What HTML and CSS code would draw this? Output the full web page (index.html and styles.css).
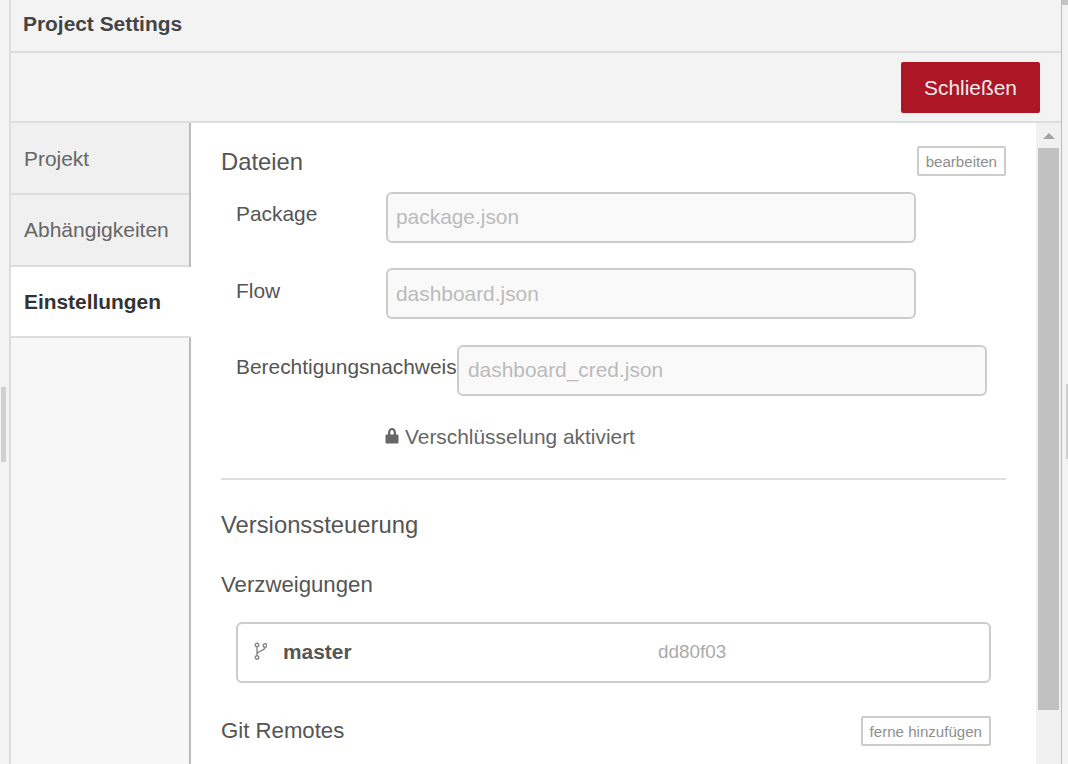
FILE: index.html
```html
<!DOCTYPE html>
<html lang="de">
<head>
<meta charset="utf-8">
<title>Project Settings</title>
<link rel="stylesheet" href="styles.css">
</head>
<body>
<div class="page">
  <div class="handle handle-left"></div>
  <div class="handle handle-right"></div>
  <div class="handle-top"></div>
  <main class="dialog">
    <header class="title-bar">Project Settings</header>
    <div class="toolbar"><button class="close-btn">Schließen</button></div>
    <div class="body">
      <nav class="tabs">
        <div class="tab">Projekt</div>
        <div class="tab tab-deps">Abhängigkeiten</div>
        <div class="tab tab-active">Einstellungen</div>
      </nav>
      <section class="content">
        <div class="pane">
          <div class="heading-row heading-files">
            <h2 class="heading">Dateien</h2>
            <button class="small-btn">bearbeiten</button>
          </div>
          <div class="file-row row-package">
            <label class="file-label">Package</label>
            <div class="file-input">package.json</div>
          </div>
          <div class="file-row row-flow">
            <label class="file-label">Flow</label>
            <div class="file-input">dashboard.json</div>
          </div>
          <div class="file-row row-cred">
            <label class="file-label file-label-auto">Berechtigungsnachweis</label>
            <div class="file-input">dashboard_cred.json</div>
          </div>
          <div class="encrypt">
            <svg class="lock" viewBox="0 0 14 16" width="14" height="16" aria-hidden="true"><path fill="#666" fill-rule="evenodd" d="M3 6.500V4.600C3 2 4.800 0 7 0s4 2 4 4.600v1.900h1.200c.7 0 1.300.6 1.300 1.300v6.400c0 .7-.6 1.300-1.300 1.300H1.800c-.7 0-1.300-.6-1.300-1.300V7.800c0-.7.6-1.300 1.300-1.300zm2.300 0h3.400V4.600C8.700 3 8 2.100 7 2.100s-1.700.9-1.700 2.500z"/></svg>
            <span>Verschlüsselung aktiviert</span>
          </div>
          <hr class="rule">
          <h2 class="heading heading-vc">Versionssteuerung</h2>
          <h3 class="subheading">Verzweigungen</h3>
          <div class="branch">
            <svg class="branch-icon" viewBox="0 0 13 22" width="13" height="22" aria-hidden="true"><g fill="none" stroke="#888" stroke-width="1.400"><circle cx="3" cy="3" r="1.800"/><circle cx="3" cy="15.500" r="1.800"/><circle cx="11" cy="3.500" r="1.800"/><path d="M3 4.800v8.900M11 5.300c0 4-7.500 2.800-8 7.200"/></g></svg>
            <span class="branch-name">master</span>
            <span class="branch-sha">dd80f03</span>
          </div>
          <div class="heading-row heading-remotes">
            <h3 class="subheading subheading-flat">Git Remotes</h3>
            <button class="small-btn">ferne hinzufügen</button>
          </div>
        </div>
      </section>
      <div class="scrollbar">
        <div class="scroll-arrow"></div>
        <div class="scroll-thumb"></div>
      </div>
    </div>
  </main>
</div>
</body>
</html>
```
FILE: styles.css
```css
* { box-sizing: border-box; }
html, body { margin: 0; height: 100%; overflow: hidden; }
body { font-family: "Liberation Sans", Arial, sans-serif; background: #f3f3f3; color: #555; }
.page { position: relative; height: 764px; width: 1068px; padding-left: 9px; padding-right: 6px; overflow: hidden; }
.handle { position: absolute; top: 387px; width: 5px; height: 75px; background: #d0d0d0; }
.handle-left { left: 1px; }
.handle-right { left: 1066px; top: 384px; width: 2px; }
.handle-top { position: absolute; left: 1062px; top: 0; width: 6px; height: 5px; background: #c4c4c4; }
.dialog { height: 764px; border-left: 2px solid #ddd; border-right: 1px solid #bbb; background: #f3f3f3; display: flex; flex-direction: column; }
.title-bar { height: 53px; padding: 12px 0 0 12px; border-bottom: 2px solid #ddd; font-size: 20.900px; line-height: 24px; font-weight: 700; color: #444; }
.toolbar { height: 70px; padding: 9px 21px 0 0; border-bottom: 2px solid #ddd; display: flex; justify-content: flex-end; align-items: flex-start; }
.close-btn { width: 139px; height: 51px; border: 0; border-radius: 2px; background: #ad1625; color: #eee; font: 20.900px "Liberation Sans", Arial, sans-serif; }
.body { flex: 1; display: flex; min-height: 0; background: #fff; }
.tabs { width: 180px; flex: none; background: #f7f7f7; border-right: 2px solid #bbb; }
.tab { height: 72px; padding: 23px 0 0 13px; background: #f0f0f0; border-bottom: 2px solid #ddd; font-size: 20.900px; line-height: 24px; color: #666; }
.tab:first-child { padding-top: 24px; }
.tab-deps { font-size: 21px; }
.tab-active { height: 71px; margin-right: -2px; position: relative; background: #fff; color: #333; font-weight: 700; }
.content { flex: 1; min-width: 0; background: #fff; padding-left: 30px; padding-right: 30px; }
.pane { display: flex; flex-direction: column; }
.scrollbar { width: 25px; flex: none; background: #f1f1f1; padding: 0 2px; display: flex; flex-direction: column; align-items: stretch; }
.scroll-arrow { width: 0; height: 0; margin: 10px auto 9px; border-left: 6px solid transparent; border-right: 6px solid transparent; border-bottom: 6px solid #a3a3a3; }
.scroll-thumb { height: 562px; background: #c1c1c1; }
.heading-row { display: flex; justify-content: space-between; align-items: center; }
.heading-files { height: 30px; margin-top: 23px; }
.heading-files .heading { padding-top: 2px; }
.heading { margin: 0; font-size: 23.800px; line-height: 30px; font-weight: 400; color: #555; }
.small-btn { height: 30px; padding: 0 7px; background: #fff; border: 2px solid #ccc; border-radius: 2px; color: #8f8f8f; font: 15.100px "Liberation Sans", Arial, sans-serif; }
.file-row { display: flex; align-items: flex-start; padding-left: 15px; }
.row-package { margin-top: 16px; }
.row-flow { margin-top: 25px; }
.row-cred { margin-top: 26px; }
.file-label { width: 150px; flex: none; font-size: 20.900px; line-height: 24px; padding-top: 10px; color: #555; white-space: nowrap; }
.file-label-auto { width: 221px; }
.file-input { width: 530px; height: 51px; padding: 10px 8px 0; border: 2px solid #ccc; border-radius: 6px; background: #f9f9f9; color: #bbb; font-size: 20.900px; line-height: 26px; }
.row-flow .file-label { padding-top: 11px; }
.row-flow .file-input { padding-top: 11px; }
.row-cred .file-input { padding-left: 9px; }
.encrypt { display: flex; align-items: center; gap: 6px; margin: 27px 0 0 164px; height: 28px; font-size: 20.900px; color: #666; }
.lock { flex: none; margin-bottom: 3px; }
.rule { width: 100%; height: 2px; margin: 27px 0 0; border: 0; background: #ddd; }
.heading-vc { margin-top: 30px; }
.subheading { margin: 0; font-size: 22.200px; line-height: 26px; font-weight: 400; color: #555; }
h3.subheading { margin-top: 32px; }
h3.subheading-flat { margin-top: 0; }
.branch { display: flex; align-items: center; width: 755px; height: 61px; margin: 24px 0 0 15px; padding-left: 16px; border: 2px solid #ccc; border-radius: 6px; background: #fff; }
.branch-icon { flex: none; }
.branch-name { width: 375px; margin-left: 16px; padding-bottom: 2px; font-size: 20.900px; font-weight: 700; color: #555; }
.branch-sha { padding-bottom: 2px; font-size: 18.900px; color: #aaa; }
.heading-remotes { width: 770px; height: 30px; margin-top: 33px; }
```
